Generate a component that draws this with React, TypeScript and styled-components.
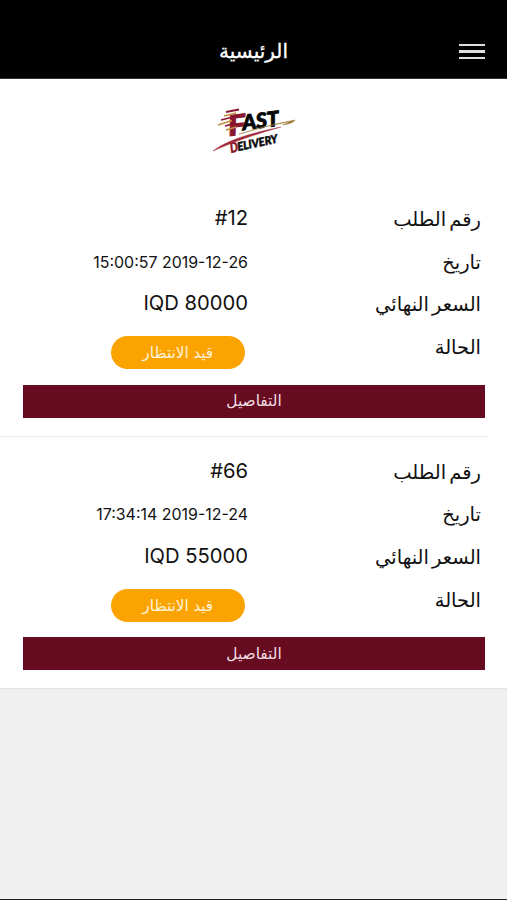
import React from "react";
import styled, { createGlobalStyle } from "styled-components";

const GlobalStyle = createGlobalStyle`
  * { box-sizing: border-box; }
  body { margin: 0; background: #f0f0f0; font-family: "DejaVu Sans", sans-serif; }
`;

const Screen = styled.div`
  height: 900px;
  display: flex;
  flex-direction: column;
  background: #f0f0f0;
  border-bottom: 1px solid #222;
  overflow: hidden;
`;

const Header = styled.header`
  height: 79px;
  flex: none;
  padding: 24px 22px 0;
  display: grid;
  grid-template-columns: 26px 1fr 26px;
  align-items: center;
  background: #000;
  border-bottom: 1px solid #333;
`;

const Title = styled.h1`
  margin: 0;
  text-align: center;
  color: #fff;
  font-size: 20px;
  font-weight: 400;
  line-height: 28px;
  -webkit-text-stroke: 0.3px #fff;
`;

const MenuButton = styled.button`
  display: flex;
  flex-direction: column;
  gap: 4px;
  padding: 1px 0 0;
  border: 0;
  background: none;
`;

const MenuLine = styled.span`
  height: 2.4px;
  background: #dedede;
`;

const LogoArea = styled.div`
  height: 105px;
  flex: none;
  display: flex;
  justify-content: center;
  padding-top: 16px;
  background: #fff;
`;

const LogoDrawing = styled.svg`
  display: block;
  overflow: visible;
`;

const Order = styled.section<{ $last?: boolean }>`
  height: 252.5px;
  flex: none;
  padding: 14px 22px 0 23px;
  background: #fff;
  border-bottom: 1px solid ${(p) => (p.$last ? "#e4e4e4" : "transparent")};
  border-image: ${(p) =>
    p.$last ? "none" : "linear-gradient(to right, #e9e9e9 487px, #fff 487px) 1"};
`;

const Row = styled.div`
  height: 42.7px;
  padding-right: 4px;
  display: grid;
  grid-template-columns: 233px 1fr;
  direction: rtl;
`;

const Label = styled.span`
  font-size: 19.5px;
  line-height: 44px;
  word-spacing: -3px;
  color: #111;
  white-space: nowrap;
`;

const Value = styled.span<{ $small?: boolean }>`
  direction: ltr;
  text-align: right;
  font-family: Inter, sans-serif;
  font-size: ${(p) => (p.$small ? 15.95 : 20.2)}px;
  line-height: ${(p) => (p.$small ? 43.5 : 39.5)}px;
  color: #111;
  white-space: nowrap;
`;

const Status = styled.span`
  width: 134.5px;
  height: 33px;
  margin: 10px 3px 0 0;
  border-radius: 17px;
  background: #fba300;
  color: #fff3dc;
  font-size: 15.3px;
  line-height: 34px;
  word-spacing: -0.5px;
  text-align: center;
`;

const Details = styled.button`
  display: block;
  width: 462px;
  height: 33px;
  margin-top: 16px;
  padding: 0;
  border: 0;
  background: #670b20;
  color: #f2dfe3;
  font-family: "DejaVu Sans", sans-serif;
  font-size: 15.4px;
  line-height: 32px;
`;

const orders = [
  { id: "#12", date: "15:00:57 2019-12-26", price: "IQD 80000" },
  { id: "#66", date: "17:34:14 2019-12-24", price: "IQD 55000" },
];

function Logo() {
  return (
    <LogoDrawing width="86" height="68" viewBox="0 -10 86 68" aria-label="Fast Delivery">
      <g fontFamily="Lato, sans-serif" fontWeight="900" fontStyle="italic">
        <g transform="translate(18 31) rotate(-7)" strokeWidth="0.9">
          <text x="0" y="0" fontSize="28" fill="#8a1730" stroke="#8a1730" textLength="18" lengthAdjust="spacingAndGlyphs">F</text>
          <text x="14.5" y="-4" fontSize="21" fill="#080808" stroke="#080808" textLength="37" lengthAdjust="spacingAndGlyphs">AST</text>
        </g>
        <g transform="translate(20 48) rotate(-12)" strokeWidth="0.5">
          <text x="0" y="0" fontSize="14" fill="#8a1730" stroke="#8a1730" textLength="8" lengthAdjust="spacingAndGlyphs">D</text>
          <text x="7.5" y="-0.5" fontSize="11.5" fill="#080808" stroke="#080808" textLength="41" lengthAdjust="spacingAndGlyphs">ELIVERY</text>
        </g>
      </g>
      <g fill="none" strokeWidth="1.8">
        <path d="M15 7 28 4.5M10 15 22 12M14 21 25 18" stroke="#8a1730" />
        <path d="M13 11 25 8M7 20 21 15.5M15 25 25 22" stroke="#c39243" />
      </g>
      <path d="M2 46Q19 32 70 22Q31 33 2 46Z" fill="#a02638" stroke="#a02638" strokeWidth="0.4" />
      <path d="M28 29Q57 20 84 15Q83 18 72 20Q80 17 77 17Q53 21 28 29Z" fill="#9c742e" stroke="#9c742e" strokeWidth="0.5" />
    </LogoDrawing>
  );
}

export default function App() {
  return (
    <Screen>
      <GlobalStyle />
      <Header>
        <span />
        <Title dir="rtl">الرئيسية</Title>
        <MenuButton aria-label="القائمة">
          <MenuLine />
          <MenuLine />
          <MenuLine />
        </MenuButton>
      </Header>
      <LogoArea>
        <Logo />
      </LogoArea>
      {orders.map((o, i) => (
        <Order key={o.id} $last={i === orders.length - 1}>
          <Row>
            <Label>رقم الطلب</Label>
            <Value>{o.id}</Value>
          </Row>
          <Row>
            <Label>تاريخ</Label>
            <Value $small>{o.date}</Value>
          </Row>
          <Row>
            <Label>السعر النهائي</Label>
            <Value>{o.price}</Value>
          </Row>
          <Row>
            <Label>الحالة</Label>
            <Status>قيد الانتظار</Status>
          </Row>
          <Details dir="rtl">التفاصيل</Details>
        </Order>
      ))}
    </Screen>
  );
}
